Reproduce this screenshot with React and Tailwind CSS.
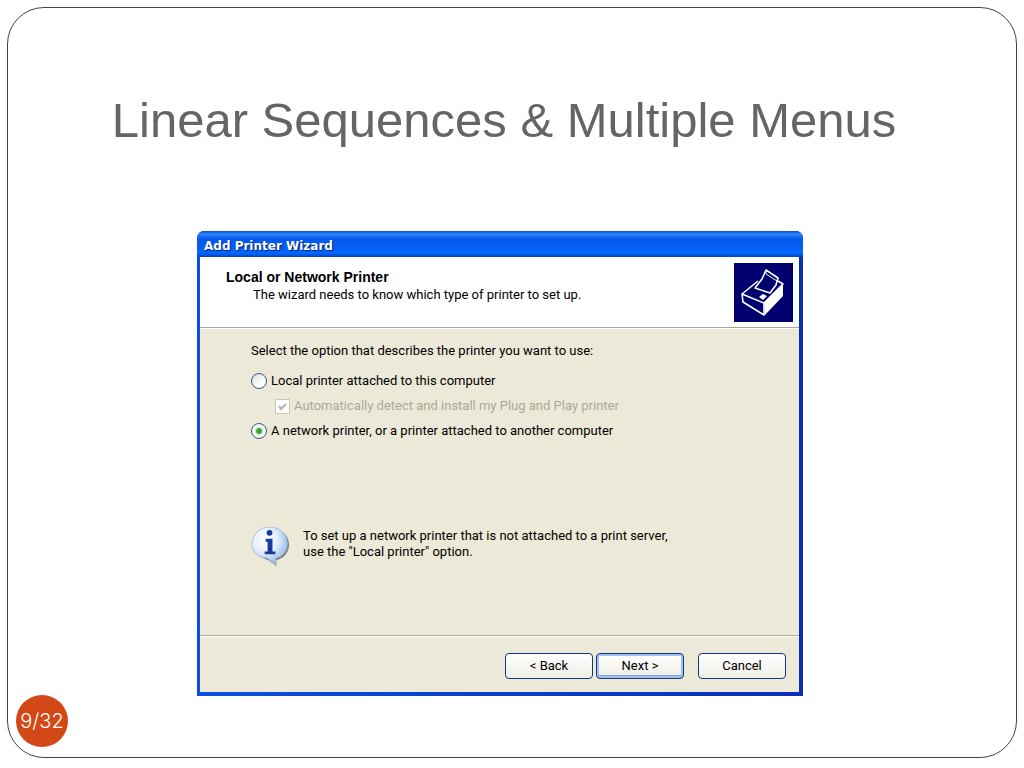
import React, { useState } from 'react';
import clsx from 'clsx';

const PRINTER_OPTIONS = {
    local: 'Local printer attached to this computer',
    network: 'A network printer, or a printer attached to another computer',
};

/**
 * Printer drawing in the wizard header
 */
const PrinterIcon = () => (
    <svg viewBox="0 0 59 59" className="size-[59px] shrink-0" aria-hidden="true">
        <defs>
            <pattern id="dots" width="4" height="4" patternUnits="userSpaceOnUse">
                <rect width="4" height="4" fill="#000078" />
                <rect width="1" height="1" fill="#000030" />
                <rect x="2" y="2" width="1" height="1" fill="#000030" />
            </pattern>
        </defs>
        <rect width="59" height="59" fill="url(#dots)" />
        <path d="M30 40 L49 21 L49 33 L31 52 Z" fill="#fff" />
        <path d="M24 18 L8 31 L9 39 L30 52 L30 40 L8 31" fill="none" stroke="#fff" strokeWidth="1.6" strokeLinejoin="round" />
        <path d="M30 40 L49 21 L44 18" fill="none" stroke="#fff" strokeWidth="1.6" strokeLinejoin="round" />
        <path d="M32 7 L44 15 L42 22 L36 30 L21 25 L28 16 Z" fill="#00006c" stroke="#fff" strokeWidth="1.6" strokeLinejoin="round" />
        <path d="M32 7 L32 11 L43 18" fill="none" stroke="#fff" strokeWidth="1" />
        <path d="M25 34 L29 31 L33 33 L29 37 Z" fill="#fff" />
    </svg>
);

/**
 * Speech balloon with an "i"
 */
const InfoIcon = () => (
    <svg viewBox="0 0 42 42" className="size-[41px] shrink-0" aria-hidden="true">
        <defs>
            <radialGradient id="balloon" cx="38%" cy="35%" r="68%">
                <stop offset="0" stopColor="#fff" />
                <stop offset="0.5" stopColor="#e6f0fd" />
                <stop offset="1" stopColor="#8fb8ee" />
            </radialGradient>
        </defs>
        <path d="M21 2 C32 2 39 9 39 18 C39 26 34 32 26 34 L26 40 L18 34 C9 32 3 27 3 19 C3 9 11 2 21 2 Z" fill="#66676c" opacity="0.8" />
        <path d="M19 0 C30 0 37 8 37 17 C37 25 32 30 25 32 L25 38 L17 32 C7 31 1 26 1 18 C1 8 9 0 19 0 Z" fill="url(#balloon)" stroke="#a9c0e0" strokeWidth="1" />
        <circle cx="19" cy="6" r="3" fill="#1c3a9c" />
        <path d="M15 12 H22 V25 H25 V28 H14 V25 H17 V15 H15 Z" fill="#1c3a9c" />
    </svg>
);

const PrinterRadio = ({ value, selected, onSelect }) => (
    <label className="flex items-center gap-1 leading-4">
        <input
            type="radio"
            name="printer"
            value={value}
            checked={selected}
            onChange={() => onSelect(value)}
            className="size-4 shrink-0 appearance-none rounded-full border border-[#31598a] bg-[linear-gradient(135deg,#dcdcd8,#ffffff_65%)] checked:bg-[radial-gradient(circle,#38ac30_0,#29a021_2px,#f4f8f4_4px)]"
        />
        {PRINTER_OPTIONS[value]}
    </label>
);

const WizardButton = ({ children, focused }) => (
    <button
        type="button"
        className={clsx(
            'h-[26px] w-[88px] rounded-[4px] border border-[#0f3a75] bg-linear-to-b from-white to-[#eeede6] leading-4',
            focused && 'shadow-[inset_0_0_0_2px_#a1bff0,inset_0_-3px_0_#7f9fe0]'
        )}
    >
        {children}
    </button>
);

const AddPrinterWizard = () => {
    const [printer, setPrinter] = useState('network');

    return (
        <section className="w-full max-w-[606px] overflow-hidden rounded-t-[7px] bg-linear-to-r from-[#0b4fe0] to-[#0730b8] pb-1 font-['Roboto','Liberation_Sans',sans-serif] text-[13px] text-black">
            <header className="flex h-[26px] items-center bg-[linear-gradient(to_bottom,#0a4fd0_0,#2f86fa_3px,#0558e8_8px,#0560f6_18px,#0468fc_22px,#0144c8_26px)] px-[7px]">
                <h2 className="pt-1 font-['DejaVu_Sans','Liberation_Sans',sans-serif] text-[12px] font-bold text-white [text-shadow:1px_1px_1px_#0a1f80]">
                    Add Printer Wizard
                </h2>
            </header>

            <div className="mr-1 ml-[3px] bg-[#ece9d8]">
                <div className="flex items-start justify-between border-b border-[#aca899] bg-white pt-[6px] pr-[6px] pb-[5px] pl-[26px]">
                    <div className="pt-[5px]">
                        <h3 className="font-['Liberation_Sans',sans-serif] text-[14px] font-bold leading-[18px]">
                            Local or Network Printer
                        </h3>
                        <p className="pl-[27px] leading-[18px]">The wizard needs to know which type of printer to set up.</p>
                    </div>
                    <PrinterIcon />
                </div>

                <form className="border-t border-white px-[51px] pt-[14px]">
                    <fieldset>
                        <legend className="leading-4">Select the option that describes the printer you want to use:</legend>
                        <div className="flex flex-col gap-[9px] pt-[14px]">
                            <PrinterRadio value="local" selected={printer === 'local'} onSelect={setPrinter} />
                            <label className="flex items-center gap-1 pl-6 leading-4 text-[#aca899]">
                                <span className="relative flex size-[15px] shrink-0">
                                    <input
                                        type="checkbox"
                                        defaultChecked
                                        disabled
                                        className="size-[15px] appearance-none border border-[#cac8bb] bg-white"
                                    />
                                    <svg viewBox="0 0 15 15" className="absolute inset-0" aria-hidden="true">
                                        <path d="M4 7 L6 10 L11 5" fill="none" stroke="#bcbab0" strokeWidth="2.4" />
                                    </svg>
                                </span>
                                Automatically detect and install my Plug and Play printer
                            </label>
                            <PrinterRadio value="network" selected={printer === 'network'} onSelect={setPrinter} />
                        </div>
                    </fieldset>

                    <div className="flex gap-[11px] pt-[88px] pb-[67px]">
                        <InfoIcon />
                        <p className="pt-[1px] leading-4">
                            To set up a network printer that is not attached to a print server,
                            <br />
                            use the &quot;Local printer&quot; option.
                        </p>
                    </div>
                </form>

                <footer className="border-t border-[#aca899]">
                    <div className="flex justify-end gap-[3px] border-t border-white pt-4 pr-[13px] pb-[13px]">
                        <WizardButton>&lt; Back</WizardButton>
                        <WizardButton focused>Next &gt;</WizardButton>
                        <div className="pl-[11px]">
                            <WizardButton>Cancel</WizardButton>
                        </div>
                    </div>
                </footer>
            </div>
        </section>
    );
};

const App = () => (
    <div className="flex min-h-screen flex-col bg-white px-[7px] pt-[7px] pb-[10px] font-['Liberation_Sans',sans-serif]">
        <main className="relative flex flex-1 flex-col items-center rounded-[37px] border border-[#444] px-6 pr-12 pb-12">
            <h1 className="pt-[84px] pl-2 text-center text-[49px] leading-[56px] text-[#696464]">
                Linear Sequences &amp; Multiple Menus
            </h1>
            <div className="flex w-full justify-center pt-[83px]">
                <AddPrinterWizard />
            </div>
            <span className="absolute bottom-[10px] left-2 flex size-[52px] items-center justify-center rounded-full bg-[#d34817] font-['Inter',sans-serif] text-[20px] font-light text-white">
                9/32
            </span>
        </main>
    </div>
);

export default App;
